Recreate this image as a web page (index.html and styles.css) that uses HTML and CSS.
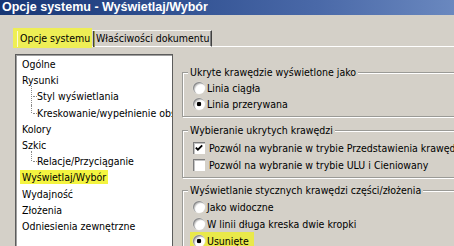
FILE: index.html
```html
<!DOCTYPE html>
<html lang="pl">
<head>
<meta charset="utf-8">
<title>Opcje systemu - Wyświetlaj/Wybór</title>
<link rel="stylesheet" href="styles.css">
</head>
<body>
<div class="window">
  <div class="titlebar">Opcje systemu - Wyświetlaj/Wybór</div>
  <div class="sheet">
    <div class="tabs">
      <div class="tab tab-active"><span class="tab-label">Opcje systemu</span></div>
      <div class="tab tab-inactive">Właściwości dokumentu</div>
      <div class="tab-fill"></div>
    </div>
    <div class="panel">
      <ul class="tree">
        <li class="node">Ogólne</li>
        <li class="node">Rysunki</li>
        <li class="node child first">Styl wyświetlania</li>
        <li class="node child last">Kreskowanie/wypełnienie obszaru</li>
        <li class="node">Kolory</li>
        <li class="node">Szkic</li>
        <li class="node child first last">Relacje/Przyciąganie</li>
        <li class="node"><span class="tree-hl">Wyświetlaj/Wybór</span></li>
        <li class="node">Wydajność</li>
        <li class="node">Złożenia</li>
        <li class="node">Odniesienia zewnętrzne</li>
      </ul>
      <div class="options">
        <fieldset class="group g1">
          <legend>Ukryte krawędzie wyświetlone jako</legend>
          <div class="opt"><span class="radio"></span><span class="opt-text">Linia ciągła</span></div>
          <div class="opt"><span class="radio on"></span><span class="opt-text">Linia przerywana</span></div>
        </fieldset>
        <fieldset class="group g2">
          <legend>Wybieranie ukrytych krawędzi</legend>
          <div class="opt"><span class="check on"><svg viewBox="0 0 12 12" width="12" height="12"><path d="M2.8 5.6 L4.9 7.7 L9.2 3.4" fill="none" stroke="#000" stroke-width="1.8"/></svg></span><span class="opt-text">Pozwól na wybranie w trybie Przedstawienia krawędzi</span></div>
          <div class="opt"><span class="check"></span><span class="opt-text">Pozwól na wybranie w trybie ULU i Cieniowany</span></div>
        </fieldset>
        <fieldset class="group g3">
          <legend>Wyświetlanie stycznych krawędzi części/złożenia</legend>
          <div class="opt"><span class="radio"></span><span class="opt-text">Jako widoczne</span></div>
          <div class="opt"><span class="radio"></span><span class="opt-text">W linii długa kreska dwie kropki</span></div>
          <div class="opt"><span class="mark"><span class="radio on"></span><span class="opt-text">Usunięte</span></span></div>
        </fieldset>
      </div>
    </div>
  </div>
</div>
</body>
</html>
```
FILE: styles.css
```css
html, body {
  margin: 0;
  padding: 0;
}
body {
  width: 454px;
  height: 246px;
  overflow: hidden;
  background: #d4d0c8;
  font-family: "DejaVu Sans Condensed", "DejaVu Sans", sans-serif;
  font-stretch: condensed;
  font-size: 10.5px;
  color: #000;
}
.window {
  width: 454px;
  height: 246px;
  overflow: hidden;
}
.titlebar {
  height: 15px;
  line-height: 14px;
  padding-left: 2px;
  overflow: hidden;
  white-space: nowrap;
  color: #fff;
  font-family: "Liberation Sans", Arial, sans-serif;
  font-stretch: normal;
  font-weight: bold;
  font-size: 12.5px;
  background: linear-gradient(90deg, #173674 0%, #2f4f90 35%, #4a69a8 70%, #6a88bf 100%);
  border-bottom: 0;
}
.sheet {
  padding-top: 13px;
}
.tabs {
  display: flex;
  align-items: flex-end;
  padding-left: 13px;
  height: 19px;
}
.tab {
  white-space: nowrap;
}
.tab-active {
  height: 20px;
  margin-bottom: -1px;
  width: 79px;
  background: #eeee55;
  display: flex;
  align-items: center;
  padding-left: 4px;
  box-sizing: border-box;
  position: relative;
}
.tab-label {
  height: 16px;
  line-height: 15px;
  padding: 0 3px 0 2px;
  border-left: 1px solid #fbfbd8;
  border-right: 1px solid #404040;
  box-shadow: 1px 0 0 #a0a050;
  margin-top: 2px;
}
.tab-inactive {
  height: 15px;
  line-height: 15px;
  border-top: 1px solid #f4f4f0;
  border-right: 1px solid #404040;
  border-bottom: 1px solid #fff;
  box-shadow: -1px 0 0 #808080 inset;
  padding: 0 4px 0 4px;
  width: 111px;
}
.tab-fill {
  flex: 1;
  border-bottom: 1px solid #fff;
}
.panel {
  display: flex;
  align-items: flex-start;
  padding: 7px 0 0 15px;
  gap: 9px;
}
.tree {
  list-style: none;
  margin: 0;
  padding: 1px 0 0 6px;
  width: 150px;
  height: 200px;
  flex: none;
  background: #fff;
  border: 1px solid #5c5c5c;
  box-shadow: inset 1px 1px 0 #a0a0a0;
  overflow: hidden;
  white-space: nowrap;
}
.node {
  height: 16.2px;
  line-height: 16.2px;
  position: relative;
}
.child {
  padding-left: 15px;
}
.child::before {
  content: "";
  position: absolute;
  left: 9px;
  top: 0;
  bottom: 0;
  border-left: 1px dotted #8a8a8a;
}
.child.first::before {
  top: -2px;
}
.child.last::before {
  bottom: 50%;
}
.child::after {
  content: "";
  position: absolute;
  left: 11px;
  top: 50%;
  width: 4px;
  border-top: 1px dotted #8a8a8a;
}
.tree-hl {
  display: inline-block;
  background: #f4f440;
  line-height: 14px;
  padding: 0 2px;
  margin-left: -2px;
}
.options {
  margin-top: 11px;
  width: 330px;
  flex: none;
}
.group {
  margin: 0;
  padding: 1px 0 4px 5px;
  border: 1px solid #9a9a96;
  box-shadow: inset 1px 1px 0 #fff, 1px 1px 0 #fff;
  min-width: 0;
}
.group legend {
  padding: 0 2px;
  line-height: 14px;
  background: #d4d0c8;
  white-space: nowrap;
}
.g2 {
  margin-top: 6px;
  padding-top: 2px;
}
.g3 {
  margin-top: 5px;
}
.opt {
  display: flex;
  align-items: center;
  height: 16px;
  white-space: nowrap;
}
.g2 .opt, .g3 .opt {
  height: 17px;
}
.radio {
  flex: none;
  width: 12px;
  height: 12px;
  border-radius: 50%;
  margin: 0 2px 0 5px;
  box-sizing: border-box;
  background: #fff;
  box-shadow: inset 1px 1px 0 #8c8c8c, inset 2px 2px 1px #c8c8c8, 0 0 0 0.5px #e0ded8;
}
.radio.on {
  background: radial-gradient(circle at 50% 50%, #000 0, #000 2px, #fff 2.6px);
}
.check {
  flex: none;
  width: 12px;
  height: 12px;
  margin: 0 4px 0 5px;
  box-sizing: border-box;
  background: #fff;
  box-shadow: inset 1px 1px 0 #7c7c7c, inset 2px 2px 0 #c4c4c4;
  display: block;
}
.check svg {
  display: block;
}
.mark {
  display: flex;
  align-items: center;
  height: 100%;
  background: #e9e94a;
  margin-left: 2px;
  padding: 0 5px 0 3px;
}
.mark .radio {
  margin-left: 0;
}
```
